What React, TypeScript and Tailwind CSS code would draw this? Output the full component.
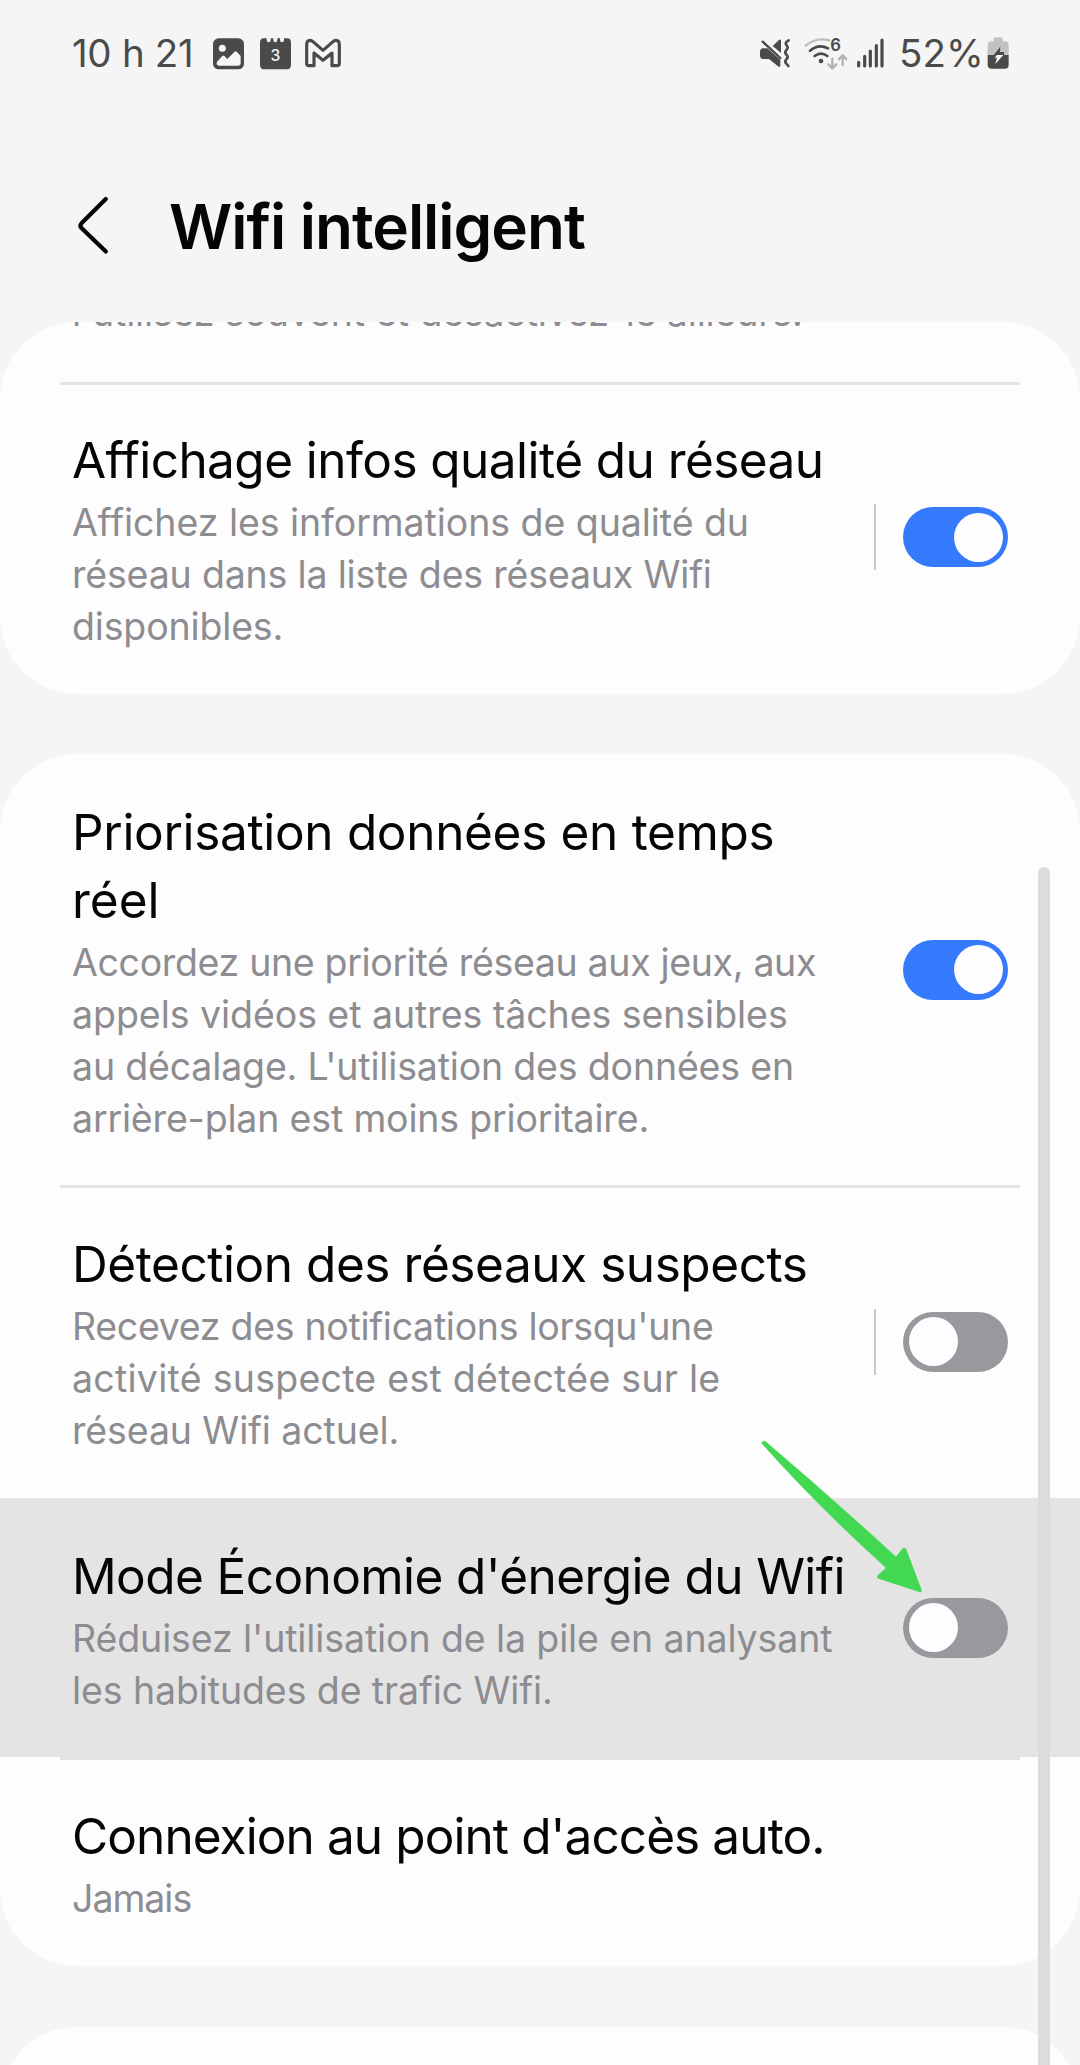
import type { ReactNode } from "react";

type Line = { text: string; tracking: string };

function Toggle({ on = false }: { on?: boolean }) {
  return (
    <button
      type="button"
      role="switch"
      aria-checked={on}
      className={
        on
          ? "flex h-[60px] w-[105px] shrink-0 items-center justify-end rounded-full bg-[#3579fd] px-[5.5px]"
          : "flex h-[60px] w-[105px] shrink-0 items-center justify-start rounded-full bg-[#99989d] px-[5.5px]"
      }
    >
      <span className="size-[49px] rounded-full bg-[#fdfcff]" />
    </button>
  );
}

function Row({
  title,
  lines,
  height,
  padding,
  divider = false,
  highlighted = false,
  separator = false,
  control,
}: {
  title: Line[];
  lines: Line[];
  height: string;
  padding: string;
  divider?: boolean;
  highlighted?: boolean;
  separator?: boolean;
  control?: ReactNode;
}) {
  return (
    <div
      className={`relative flex items-center justify-between px-[72px] ${height} ${highlighted ? "bg-[#e4e4e4]" : ""}`}
    >
      {divider && <span className="absolute inset-x-[60px] top-0 h-[3px] bg-[#e4e4e4]" />}
      <div className={`self-start whitespace-nowrap ${padding}`}>
        <h2 className="text-[49.5px] leading-[68px] text-[#050505]">
          {title.map((l) => (
            <span key={l.text} className={`block ${l.tracking}`}>
              {l.text}
            </span>
          ))}
        </h2>
        <p className="mt-[2.5px] text-[37.5px] leading-[52px] text-[#8d8c91]">
          {lines.map((l) => (
            <span key={l.text} className={`block ${l.tracking}`}>
              {l.text}
            </span>
          ))}
        </p>
      </div>
      <div className="flex items-center gap-[27px]">
        {separator && <span className="h-[66px] w-[2px] bg-[#c9c9c9]" />}
        {control}
      </div>
    </div>
  );
}

function StatusBar() {
  return (
    <div className="flex h-[106px] items-start justify-between pt-[36px] pr-[71px] pl-[72px] text-[38.5px] leading-[34px] text-[#4a4a4a]">
      <div className="flex h-[34px] items-start">
        <span className="w-[141px] tracking-[-0.3px] whitespace-nowrap">10 h 21</span>
        <svg className="h-[34px] w-[31px]" viewBox="459 48 93 102">
          <rect x="459" y="55" width="93" height="93" rx="17" fill="#4a4a4a" />
          <circle cx="487" cy="85" r="10.5" fill="#f6f6f6" />
          <path
            d="M470 127 L487 108 Q490 105 493 108 L502 117 L523 96 Q527 92 531 96 L542 108 V129 Q542 137 534 137 H478 Q470 137 470 129Z"
            fill="#f6f6f6"
          />
        </svg>
        <svg className="ml-[16px] h-[34px] w-[31px]" viewBox="600 48 93 102">
          <path
            d="M612 55 H620 V60 Q620 67 626 67 Q632 67 632 60 V55 H640 V60 Q640 67 646 67 Q652 67 652 60 V55 H660 V60 Q660 67 666 67 Q672 67 672 60 V55 H681 Q693 55 693 68 V134 Q693 148 679 148 H614 Q600 148 600 134 V68 Q600 55 612 55Z"
            fill="#4a4a4a"
          />
          <text
            x="646"
            y="122"
            textAnchor="middle"
            fontSize="47"
            fontWeight="500"
            fill="#f6f6f6"
            fontFamily="Inter, sans-serif"
          >
            3
          </text>
        </svg>
        <svg className="ml-[14px] h-[34px] w-[36px]" viewBox="733 48 108 102">
          <path
            d="M738 75 Q738 61 748 61 Q753 61 757 65 L787 91 L817 65 Q821 61 826 61 Q836 61 836 75 V130 Q836 137 829 137 H814 V99 L787 121 L760 99 V137 H745 Q738 137 738 130Z"
            fill="#f6f6f6"
            stroke="#4a4a4a"
            strokeWidth="9.5"
            strokeLinejoin="round"
          />
        </svg>
      </div>
      <div className="flex h-[34px] items-start">
        <svg className="h-[34px] w-[31px]" viewBox="60 48 93 102">
          <path
            d="M60 96 Q60 85 69 85 H82 L121 119 V136 Q121 144 114 139 L87 117 H69 Q60 117 60 106Z"
            fill="#4a4a4a"
          />
          <path d="M98 78 L117 60 Q123 56 123 63 V99Z" fill="#4a4a4a" />
          <path d="M68 65 L121 114" stroke="#4a4a4a" strokeWidth="7" strokeLinecap="round" />
          <path
            d="M146 61 Q133 68 139 75 Q147 83 139 90 Q133 97 139 104 Q147 111 139 118 Q133 125 139 131 L145 138"
            fill="none"
            stroke="#4a4a4a"
            strokeWidth="8"
            strokeLinecap="round"
          />
        </svg>
        <svg className="ml-[13px] h-[34px] w-[45px]" viewBox="192 48 135 102">
          <g fill="none" strokeLinecap="round">
            <path d="M197 77 Q229 51 268 61" stroke="#bdbdbd" strokeWidth="7" />
            <path d="M210 92 Q236 70 264 85" stroke="#4a4a4a" strokeWidth="8" />
            <path d="M224 108 Q243 94 262 108" stroke="#4a4a4a" strokeWidth="8" />
            <path
              d="M277 116 V144 M265 133 L277 145 L289 133 M308 135 V107 M297 118 L308 106 L319 118"
              stroke="#b2b2b2"
              strokeWidth="7"
              strokeLinejoin="round"
            />
          </g>
          <circle cx="243" cy="123" r="7" fill="#4a4a4a" />
          <text x="271" y="93" fontSize="50" fontWeight="600" fill="#4a4a4a" fontFamily="Inter, sans-serif">
            6
          </text>
        </svg>
        <svg className="ml-[8px] h-[34px] w-[28px]" viewBox="351 48 84 102">
          <path
            d="M356 127 V138 M374 109 V138 M391 93 V138 M409 77 V138 M426 60 V138"
            stroke="#4a4a4a"
            strokeWidth="9.5"
            strokeLinecap="round"
          />
        </svg>
        <span className="ml-[14px] w-[88px]">52%</span>
        <svg className="h-[34px] w-[22px]" viewBox="742 48 66 102">
          <path
            d="M762 58 Q762 52 768 52 H783 Q789 52 789 58 V64 H796 Q807 64 807 76 V106 H744 V76 Q744 64 755 64 H762Z"
            fill="#c2c2c2"
          />
          <path d="M744 105 H807 V134 Q807 146 795 146 H756 Q744 146 744 134Z" fill="#4a4a4a" />
          <path d="M782 80 L762 105 H793 V96 H781Z" fill="#4a4a4a" />
          <path d="M771 105 H791 L767 132 L772 113 H765Z" fill="#f6f6f6" />
        </svg>
      </div>
    </div>
  );
}

export default function App() {
  return (
    <div className="relative h-[2065px] w-[1080px] overflow-hidden bg-[#f5f5f5] font-['Inter','Liberation_Sans',sans-serif]">
      <StatusBar />

      <header className="flex h-[216px] items-start pl-[76px]">
        <svg className="mt-[88px] h-[62px] w-[34px]" viewBox="76 194 34 62">
          <path
            d="M105.8 199 L81.5 223.3 Q79.3 225.7 81.5 228.1 L105.8 251.6"
            fill="none"
            stroke="#050505"
            strokeWidth="4.2"
            strokeLinecap="round"
            strokeLinejoin="round"
          />
        </svg>
        <h1 className="mt-[81px] ml-[59px] text-[62px] leading-[80px] font-semibold tracking-[-1px] whitespace-nowrap text-[#050505]">
          Wifi intelligent
        </h1>
      </header>

      <main className="flex flex-col">
        <section className="h-[372px] overflow-hidden rounded-[77px] bg-[#fdfdfd]">
          <p className="-mt-[35px] mb-[43px] px-[72px] text-[37.5px] leading-[52px] tracking-[-0.15px] whitespace-nowrap text-[#8d8c91]">
            l'utilisez souvent et désactivez-le ailleurs.
          </p>
          <Row
            height="h-[310px]"
            padding="pt-[44px]"
            divider
            separator
            title={[{ text: "Affichage infos qualité du réseau", tracking: "tracking-[-0.55px]" }]}
            lines={[
              { text: "Affichez les informations de qualité du", tracking: "tracking-[-0.06px]" },
              { text: "réseau dans la liste des réseaux Wifi", tracking: "tracking-[-0.18px]" },
              { text: "disponibles.", tracking: "tracking-[-0.16px]" },
            ]}
            control={<Toggle on />}
          />
        </section>

        <section className="mt-[60px] h-[1212px] overflow-hidden rounded-[77px] bg-[#fdfdfd]">
          <Row
            height="h-[431px]"
            padding="pt-[44px]"
            title={[
              { text: "Priorisation données en temps", tracking: "tracking-[-0.32px]" },
              { text: "réel", tracking: "tracking-[0px]" },
            ]}
            lines={[
              { text: "Accordez une priorité réseau aux jeux, aux", tracking: "tracking-[-0.34px]" },
              { text: "appels vidéos et autres tâches sensibles", tracking: "tracking-[-0.05px]" },
              { text: "au décalage. L'utilisation des données en", tracking: "tracking-[-0.17px]" },
              { text: "arrière-plan est moins prioritaire.", tracking: "tracking-[-0.17px]" },
            ]}
            control={<Toggle on />}
          />
          <Row
            height="h-[313px]"
            padding="pt-[45px]"
            divider
            separator
            title={[{ text: "Détection des réseaux suspects", tracking: "tracking-[-0.44px]" }]}
            lines={[
              { text: "Recevez des notifications lorsqu'une", tracking: "tracking-[-0.3px]" },
              { text: "activité suspecte est détectée sur le", tracking: "tracking-[0.26px]" },
              { text: "réseau Wifi actuel.", tracking: "tracking-[-0.12px]" },
            ]}
            control={<Toggle />}
          />
          <Row
            height="h-[259px]"
            padding="pt-[44px]"
            highlighted
            title={[{ text: "Mode Économie d'énergie du Wifi", tracking: "tracking-[-0.59px]" }]}
            lines={[
              { text: "Réduisez l'utilisation de la pile en analysant", tracking: "tracking-[-0.11px]" },
              { text: "les habitudes de trafic Wifi.", tracking: "tracking-[-0.1px]" },
            ]}
            control={<Toggle />}
          />
          <Row
            height="h-[209px]"
            padding="pt-[45px]"
            divider
            title={[{ text: "Connexion au point d'accès auto.", tracking: "tracking-[-0.9px]" }]}
            lines={[{ text: "Jamais", tracking: "tracking-[-1px]" }]}
          />
        </section>

        <section className="mt-[61px] h-[200px] rounded-[77px] bg-[#fdfdfd]" />
      </main>

      {/* Scroll indicator */}
      <div className="absolute top-[867px] right-[30px] bottom-0 w-[12px] rounded-t-full bg-[#dcdcdc]" />

      {/* Arrow pointing at the power-saving switch */}
      <svg className="absolute top-[1430px] left-[750px] h-[175px] w-[185px]" viewBox="150 90 555 525">
        <path
          d="M187 133 Q181 124 192 123 Q196 123 200 127 Q394 292 588 470 L607 446 Q614 440 619 448 L665 570 Q667 578 658 576 L536 536 Q527 531 534 525 L558 504 Q352 318 187 133Z"
          fill="#42d852"
        />
      </svg>
    </div>
  );
}
